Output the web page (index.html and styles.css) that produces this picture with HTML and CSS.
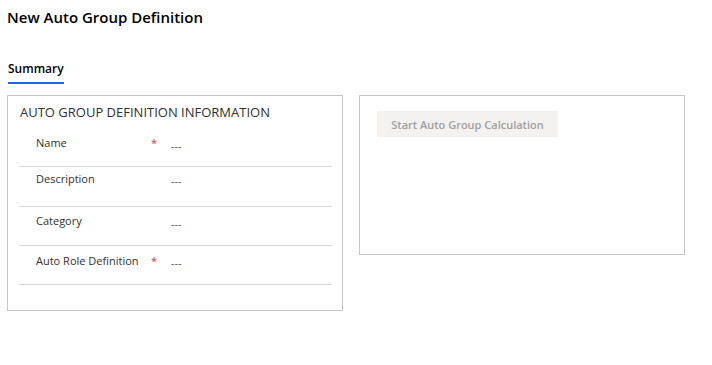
FILE: index.html
```html
<!DOCTYPE html>
<html>
<head>
<meta charset="utf-8">
<link rel="stylesheet" href="styles.css">
</head>
<body>
<div class="page">
  <h1 class="title">New Auto Group Definition</h1>
  <div class="tabs">
    <div class="tab active">Summary</div>
  </div>
  <div class="cards">
    <section class="card card-info">
      <h2 class="card-title">AUTO GROUP DEFINITION INFORMATION</h2>
      <div class="rows">
        <div class="row row-1">
          <div class="label">Name</div>
          <div class="req">*</div>
          <div class="value">---</div>
        </div>
        <div class="row row-2">
          <div class="label">Description</div>
          <div class="req"></div>
          <div class="value">---</div>
        </div>
        <div class="row row-3">
          <div class="label">Category</div>
          <div class="req"></div>
          <div class="value">---</div>
        </div>
        <div class="row row-4">
          <div class="label">Auto Role Definition</div>
          <div class="req">*</div>
          <div class="value">---</div>
        </div>
      </div>
    </section>
    <section class="card card-action">
      <button class="btn" disabled>Start Auto Group Calculation</button>
    </section>
  </div>
</div>
</body>
</html>
```

FILE: styles.css
```css
* { box-sizing: border-box; }
html, body { margin: 0; padding: 0; background: #fff; }
body {
  font-family: "Open Sans", "Noto Sans", sans-serif;
  color: #323130;
}
.page { padding: 0 0 0 7px; }
.title {
  margin: 0;
  padding-top: 6px;
  font-size: 15px;
  line-height: 22px;
  font-weight: 600;
  color: #000;
}
.tabs {
  display: flex;
  margin-top: 31px;
  padding-left: 1px;
}
.tab {
  font-size: 12px;
  font-weight: 600;
  line-height: 20px;
  color: #000;
  padding-bottom: 3px;
  border-bottom: 2px solid #2266e3;
}
.cards {
  display: flex;
  align-items: flex-start;
  gap: 16px;
  margin-top: 11px;
}
.card {
  border: 1px solid #c8c6c4;
  background: #fff;
}
.card-info {
  width: 336px;
  height: 216px;
  padding: 6px 10px 0 12px;
}
.card-title {
  margin: 0;
  font-size: 13px;
  line-height: 20px;
  font-weight: 400;
  color: #323130;
}
.rows { margin-left: -1px; }
.row {
  display: flex;
  align-items: flex-start;
  border-bottom: 1px solid #d8d8d8;
  font-size: 11px;
  line-height: 16px;
}
.row-1 { height: 45px; padding-top: 13px; }
.row-2 { height: 40px; padding-top: 4px; }
.row-3 { height: 39px; padding-top: 6px; }
.row-4 { height: 39px; padding-top: 7px; }
.label {
  width: 131px;
  padding-left: 17px;
  color: #323130;
}
.req {
  width: 21px;
  color: #d13438;
  padding-left: 1px;
}
.value {
  color: #605e5c;
  padding-top: 2px;
}
.row-1 .value { padding-top: 3px; }
.row-3 .value { padding-top: 3px; }
.card-action {
  width: 326px;
  height: 160px;
  padding: 15px 0 0 17px;
}
.btn {
  display: block;
  width: 181px;
  height: 26px;
  border: none;
  background: #f3f2f1;
  color: #a19f9d;
  font-family: inherit;
  font-size: 11px;
  font-weight: 600;
  padding: 0;
}
```
